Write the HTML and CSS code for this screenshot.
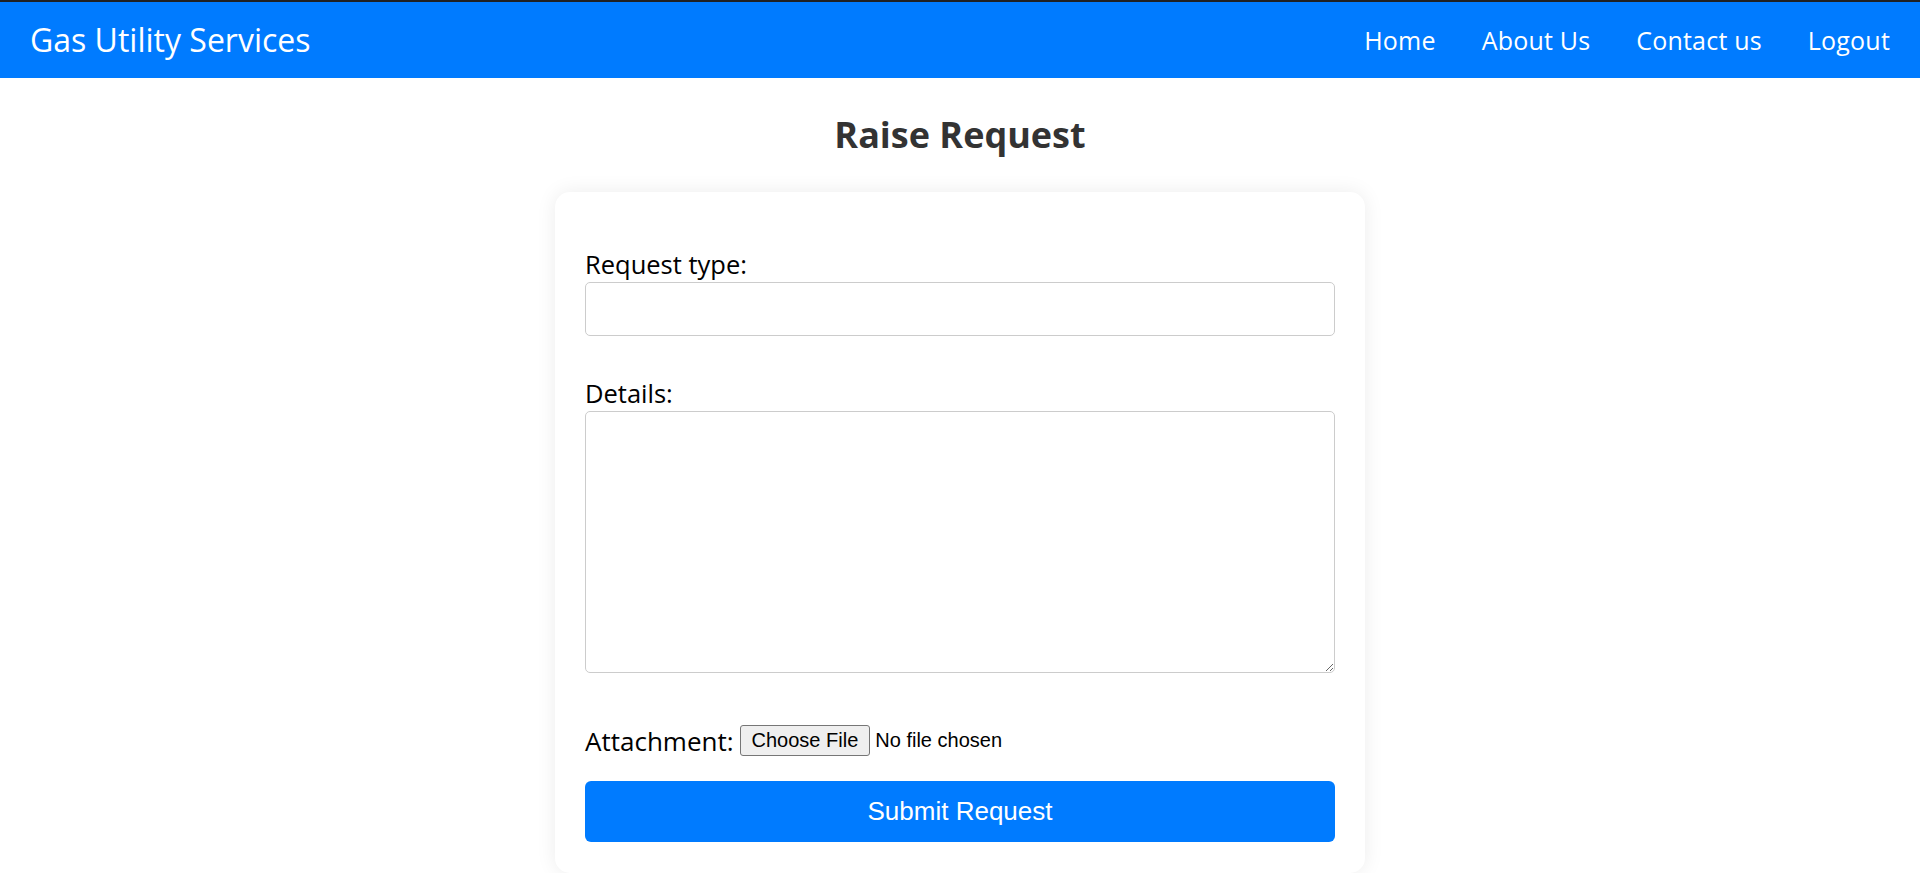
FILE: index.html
```html
<!DOCTYPE html>
<html lang="en">
<head>
<meta charset="utf-8">
<title>Raise Request - Gas Utility Services</title>
<link rel="stylesheet" href="styles.css">
</head>
<body>
<header class="navbar">
  <div class="brand">Gas Utility Services</div>
  <nav class="nav-links">
    <a href="#">Home</a>
    <a href="#">About Us</a>
    <a href="#">Contact us</a>
    <a href="#">Logout</a>
  </nav>
</header>
<main class="page">
  <h1 class="page-title">Raise Request</h1>
  <form class="card">
    <div class="field field-first">
      <label for="rtype">Request type:</label>
      <input id="rtype" type="text">
    </div>
    <div class="field field-details">
      <label for="details">Details:</label>
      <textarea id="details"></textarea>
    </div>
    <div class="attach-row">
      <span class="attach-label">Attachment:</span>
      <label class="file-btn">Choose File<input type="file" class="file-input"></label>
      <span class="file-name">No file chosen</span>
    </div>
    <button type="button" class="submit-btn">Submit Request</button>
  </form>
</main>
</body>
</html>
```
FILE: styles.css
```css
html, body {
  margin: 0;
  padding: 0;
  background: #ffffff;
}

body {
  font-family: "Open Sans", "DejaVu Sans", sans-serif;
  color: #000;
}

.navbar {
  height: 76px;
  border-top: 2px solid #1f2023;
  background: #007bff;
  display: flex;
  align-items: center;
  justify-content: space-between;
  padding: 0 30px;
}

.brand {
  color: #fff;
  font-size: 32px;
  line-height: 40px;
}

.nav-links {
  display: flex;
  gap: 46px;
}

.nav-links a {
  color: #fff;
  text-decoration: none;
  font-size: 25px;
  line-height: 34px;
  letter-spacing: 0.2px;
}

.page {
  display: flex;
  flex-direction: column;
  align-items: center;
}

.page-title {
  margin: 37px 0 37px;
  font-size: 36px;
  line-height: 40px;
  font-weight: 700;
  color: #333;
}

.card {
  width: 750px;
  padding: 30px 30px 31px;
  background: #fff;
  border-radius: 15px;
  box-shadow: 0 0 20px rgba(0, 0, 0, 0.08);
  display: flex;
  flex-direction: column;
}

.field label {
  display: block;
  font-size: 25.5px;
  line-height: 30px;
  margin-bottom: 3px;
  color: #000;
}

.field-first {
  margin-top: 27px;
}

.field-details {
  margin-top: 42px;
}

.field input,
.field textarea {
  display: block;
  box-sizing: border-box;
  width: 100%;
  border: 1px solid #ccc;
  border-radius: 5px;
  padding: 10px;
  font-size: 20px;
  font-family: "Open Sans", sans-serif;
  background: #fff;
}

.field input {
  height: 54px;
}

.field textarea {
  height: 262px;
  resize: both;
}

.attach-row {
  margin-top: 52px;
  height: 31px;
  display: flex;
  align-items: center;
}

.attach-label {
  font-size: 26px;
  line-height: 30px;
  margin-right: 6px;
}

.file-btn {
  box-sizing: border-box;
  height: 31px;
  display: flex;
  align-items: center;
  padding: 0 11px;
  border: 1px solid #767676;
  border-radius: 3px;
  background: #efefef;
  font-family: "Liberation Sans", Arial, sans-serif;
  font-size: 20px;
  color: #000;
}

.file-input {
  display: none;
}

.file-name {
  margin-left: 5px;
  font-family: "Liberation Sans", Arial, sans-serif;
  font-size: 20px;
  color: #000;
}

.submit-btn {
  margin-top: 25px;
  height: 61px;
  border: none;
  border-radius: 6px;
  background: #007bff;
  color: #fff;
  font-family: "Liberation Sans", Arial, sans-serif;
  font-size: 26px;
  cursor: pointer;
}
```
